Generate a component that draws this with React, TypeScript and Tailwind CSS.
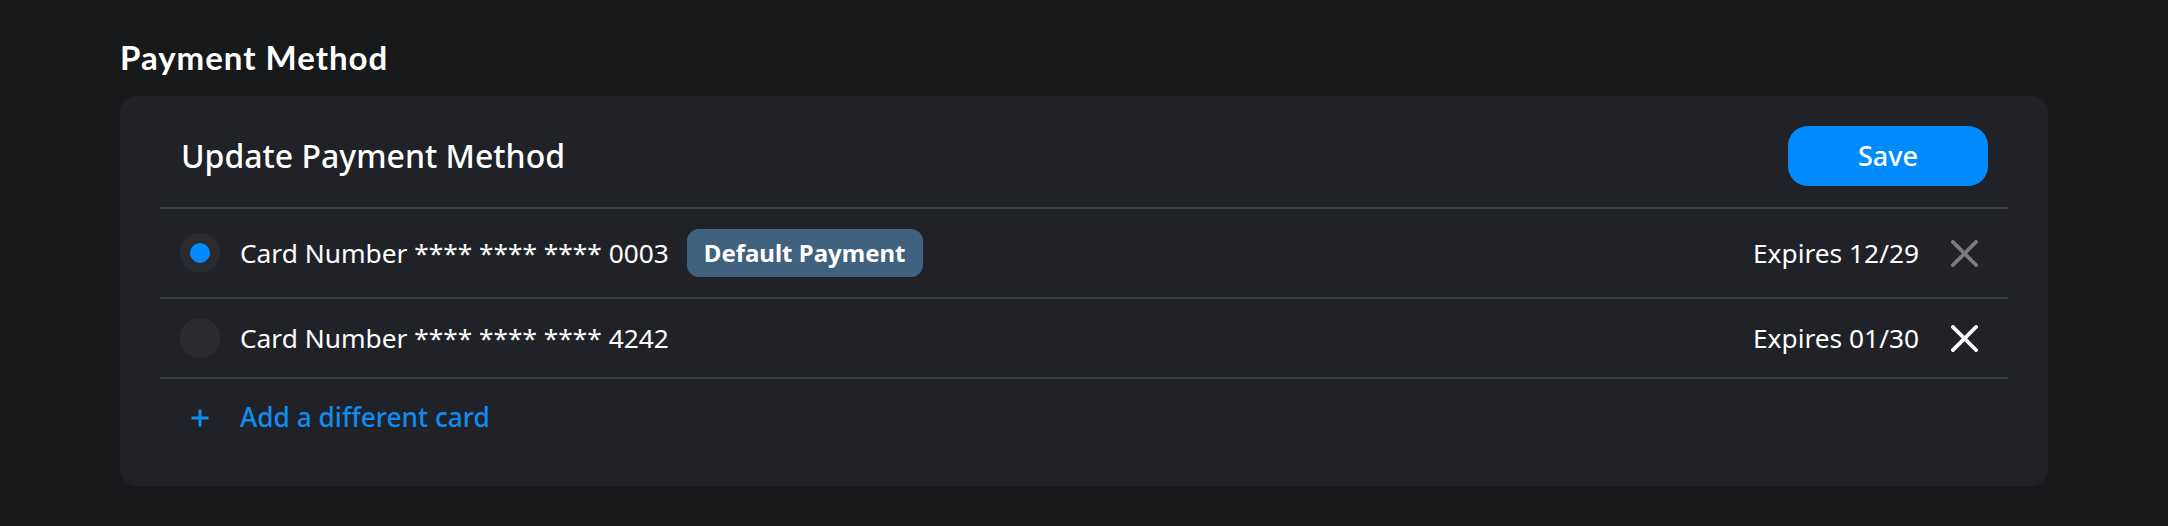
import React, { useState } from 'react';

const CARDS = [
  { id: 'c1', last4: '0003', expires: '12/29', isDefault: true },
  { id: 'c2', last4: '4242', expires: '01/30', isDefault: false },
];

const CloseIcon = ({ className }: { className?: string }) => (
  <svg width="27" height="27" viewBox="0 0 27 27" fill="none" className={className}>
    <path d="M2 2L25 25M25 2L2 25" stroke="currentColor" strokeWidth="3.8" strokeLinecap="square" />
  </svg>
);

const PlusIcon = () => (
  <svg width="18" height="18" viewBox="0 0 18 18" fill="none">
    <path d="M9 0.5V17.5M0.5 9H17.5" stroke="currentColor" strokeWidth="3" />
  </svg>
);

export default function App() {
  const [selected, setSelected] = useState('c1');

  return (
    <div className="min-h-screen bg-[#18191b] px-[120px] pt-[34px] text-white" style={{ fontFamily: '"Noto Sans", "Open Sans", sans-serif' }}>
      <h2 className="mb-[16px] text-[33px] font-bold leading-[46px] tracking-[1px]" style={{ fontFamily: 'Lato, "Noto Sans", sans-serif' }}>
        Payment Method
      </h2>

      <div className="rounded-2xl bg-[#202227] px-10 py-[30px]">
        {/* header */}
        <div className="flex items-center justify-between border-b-2 border-[#3a3d42] pb-[21px] pl-[21px] pr-5">
          <span className="text-[32px] font-medium leading-none">Update Payment Method</span>
          <button className="h-[60px] w-[200px] rounded-[20px] bg-[#008cff] text-[27px] font-medium text-white">
            Save
          </button>
        </div>

        {/* saved cards */}
        {CARDS.map((card) => {
          const active = selected === card.id;
          return (
            <div
              key={card.id}
              className={`flex items-center border-b-2 border-[#3a3d42] pl-5 pr-[30px] ${card.isDefault ? 'h-[90px]' : 'h-[80px]'}`}
            >
              <button
                onClick={() => setSelected(card.id)}
                className="flex h-10 w-10 shrink-0 items-center justify-center rounded-full bg-[#2a2b2f]"
              >
                {active && <span className="h-5 w-5 rounded-full bg-[#008cff]" />}
              </button>
              <span className="ml-5 text-[26.3px] leading-none">Card Number **** **** **** {card.last4}</span>
              {card.isDefault && (
                <span className="ml-[18px] flex h-[48px] items-center rounded-xl bg-[#41627f] px-[17px] text-[24px] font-bold">
                  Default Payment
                </span>
              )}
              <div className="ml-auto flex items-center gap-8">
                <span className="text-[26.3px] leading-none">Expires {card.expires}</span>
                <CloseIcon className={card.isDefault ? 'text-[#7b7c7f]' : 'text-white'} />
              </div>
            </div>
          );
        })}

        {/* add card */}
        <div className="flex h-[77px] items-center pl-5 text-[#0e8cf2]">
          <span className="flex w-10 justify-center">
            <PlusIcon />
          </span>
          <span className="ml-5 text-[26.3px] font-medium leading-none">Add a different card</span>
        </div>
      </div>
    </div>
  );
}
